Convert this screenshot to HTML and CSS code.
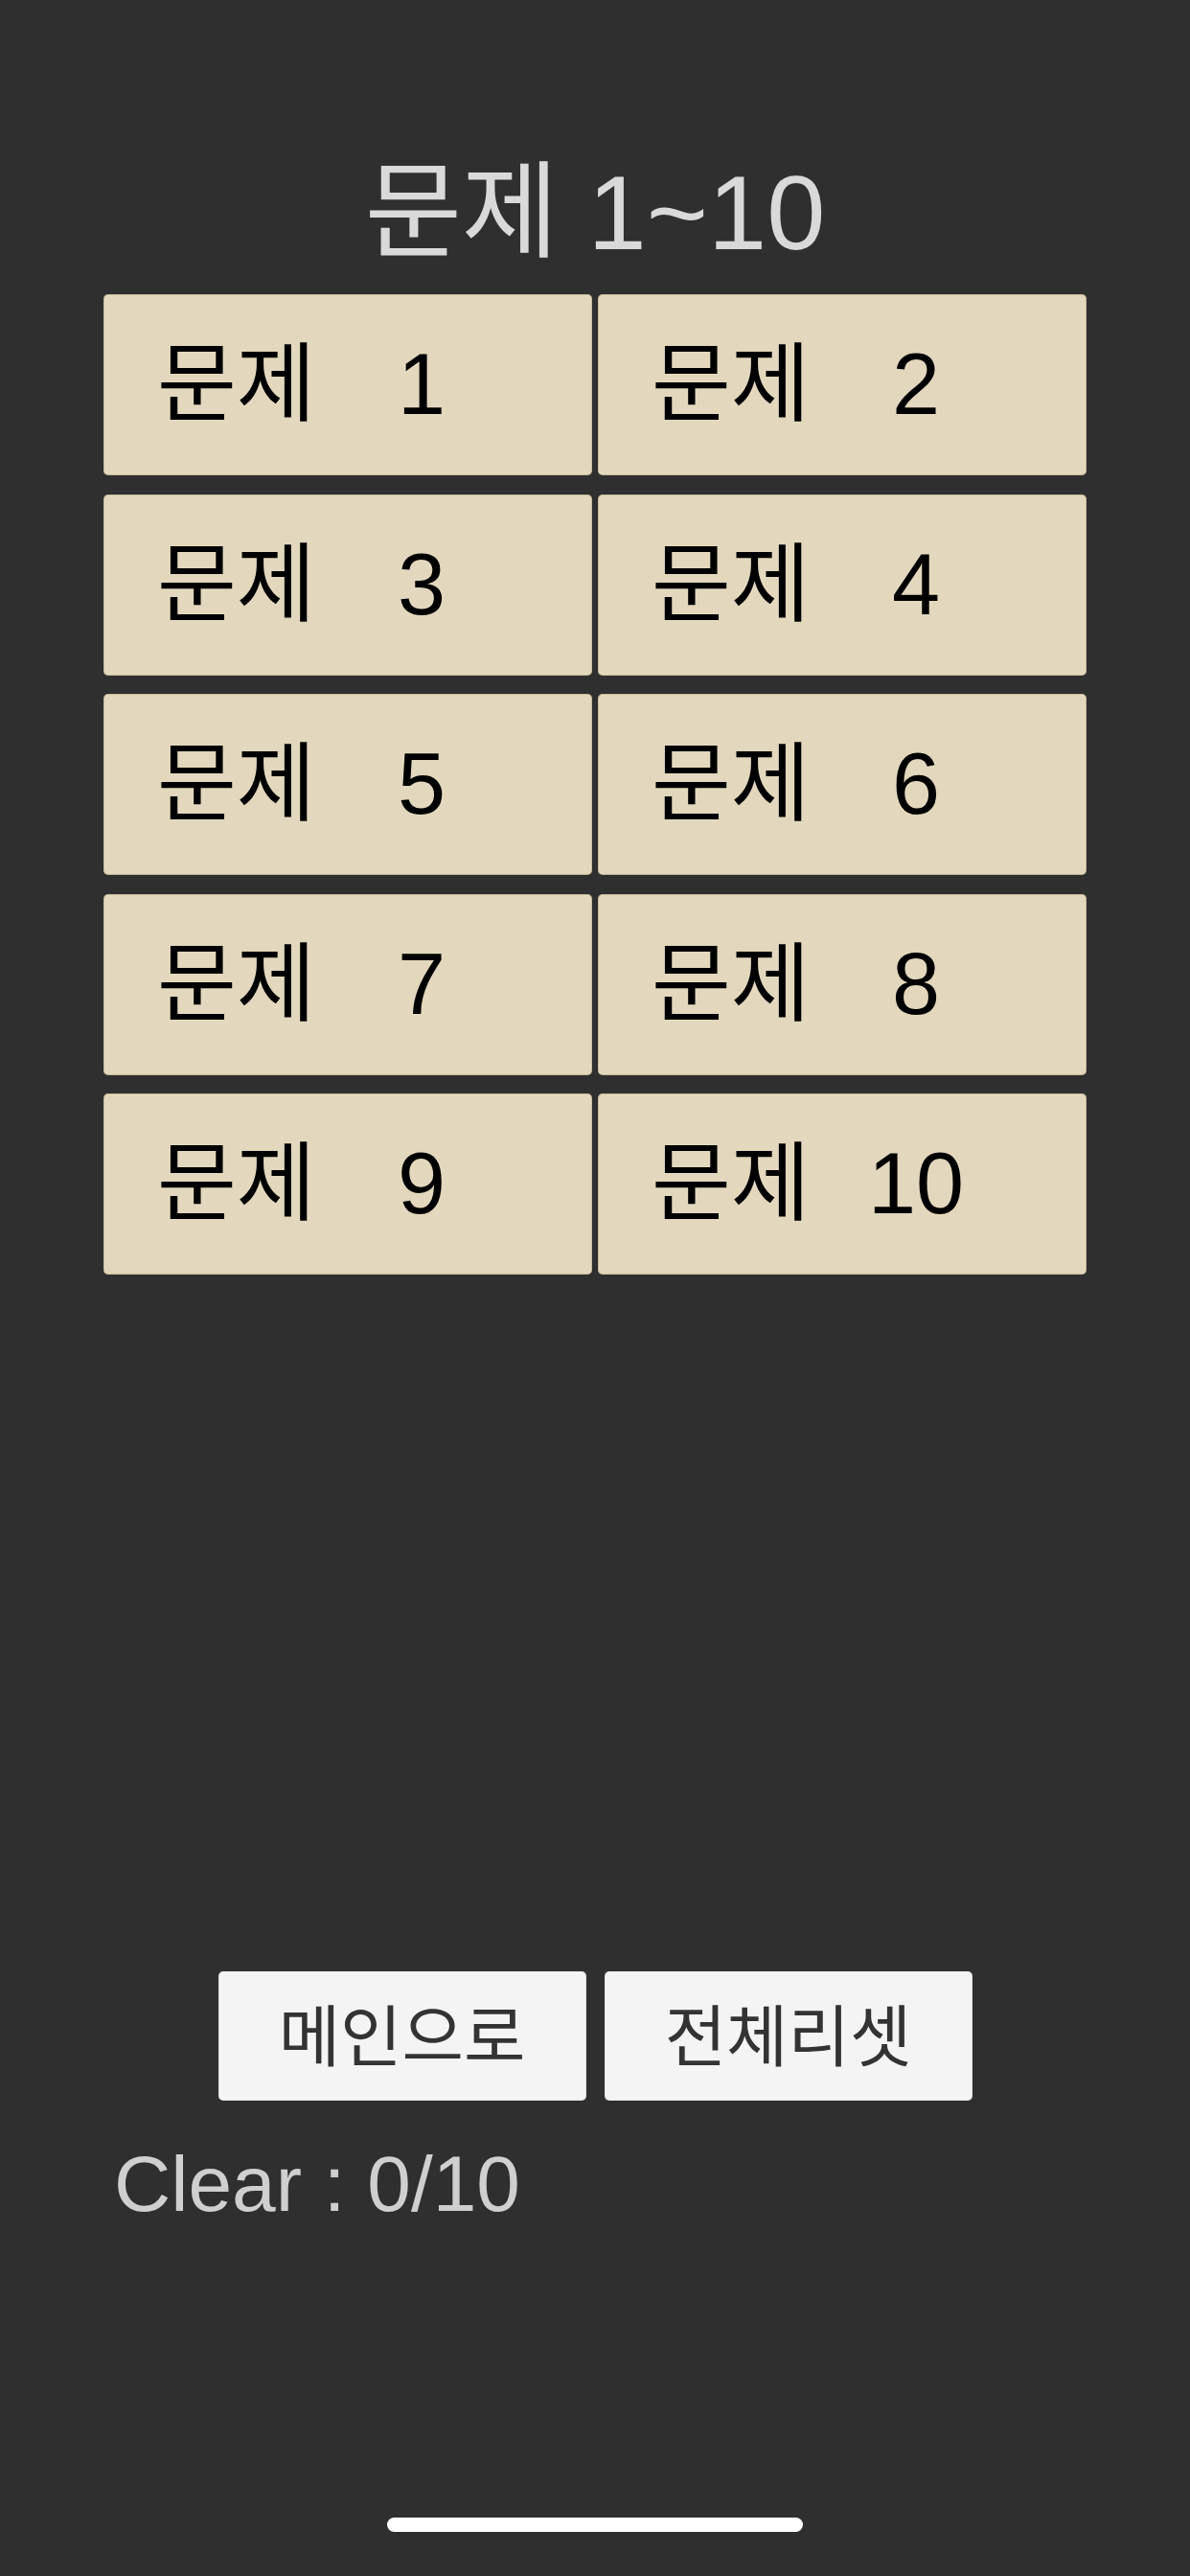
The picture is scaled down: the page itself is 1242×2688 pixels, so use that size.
FILE: index.html
```html
<!DOCTYPE html>
<html lang="ko">
<head>
<meta charset="utf-8">
<title>문제 1~10</title>
<link rel="stylesheet" href="styles.css">
</head>
<body>
<div class="screen">
  <h1 class="title">문제 1~10</h1>
  <div class="grid">
    <button class="q"><span class="q-label">문제</span><span class="q-num">1</span></button>
    <button class="q"><span class="q-label">문제</span><span class="q-num">2</span></button>
    <button class="q"><span class="q-label">문제</span><span class="q-num">3</span></button>
    <button class="q"><span class="q-label">문제</span><span class="q-num">4</span></button>
    <button class="q"><span class="q-label">문제</span><span class="q-num">5</span></button>
    <button class="q"><span class="q-label">문제</span><span class="q-num">6</span></button>
    <button class="q"><span class="q-label">문제</span><span class="q-num">7</span></button>
    <button class="q"><span class="q-label">문제</span><span class="q-num">8</span></button>
    <button class="q"><span class="q-label">문제</span><span class="q-num">9</span></button>
    <button class="q"><span class="q-label">문제</span><span class="q-num">10</span></button>
  </div>
  <div class="footer">
    <div class="actions">
      <button class="act">메인으로</button>
      <button class="act">전체리셋</button>
    </div>
    <div class="clear">Clear : 0/10</div>
    <div class="home-bar"></div>
  </div>
</div>
</body>
</html>
```
FILE: styles.css
```css
html, body {
  margin: 0;
  padding: 0;
  background: #2f2f2f;
}

body {
  font-family: "Liberation Sans", "Noto Sans CJK KR", sans-serif;
}

.screen {
  height: 2688px;
  display: flex;
  flex-direction: column;
  box-sizing: border-box;
}

.title {
  margin: 156px 0 0;
  font-size: 110px;
  line-height: 132px;
  font-weight: normal;
  text-align: center;
  color: #d9d9d9;
}

.grid {
  margin: 19px auto 0;
  width: 1026px;
  display: grid;
  grid-template-columns: 1fr 1fr;
  grid-auto-rows: 189px;
  column-gap: 6px;
  row-gap: 19.5px;
}

.q {
  display: grid;
  grid-template-columns: 236px 192px;
  align-items: center;
  padding: 0;
  margin: 0;
  border: none;
  border-radius: 5px;
  background: #e3d8bd;
  box-shadow: inset 0 0 0 1px rgba(150, 130, 90, 0.35);
  font-family: "Liberation Sans", "Noto Sans CJK KR", sans-serif;
  font-size: 90px;
  line-height: 189px;
  color: #000;
  text-align: left;
}

.q-label {
  padding-left: 56px;
  white-space: nowrap;
}

.q-num {
  text-align: center;
}

.footer {
  margin-top: auto;
  display: flex;
  flex-direction: column;
}

.actions {
  display: flex;
  justify-content: center;
  gap: 19px;
}

.act {
  width: 384px;
  height: 135px;
  margin: 0;
  padding: 0 0 8px;
  border: none;
  border-radius: 5px;
  background: #f4f4f4;
  box-shadow: inset 0 0 0 1px rgba(0, 0, 0, 0.08);
  font-family: "Noto Sans CJK KR", sans-serif;
  font-size: 70px;
  line-height: 127px;
  color: #333;
}

.clear {
  margin-top: 37px;
  padding-left: 119px;
  font-size: 82px;
  line-height: 100px;
  color: #cfcfcf;
}

.home-bar {
  align-self: center;
  width: 434px;
  height: 15px;
  margin: 298px 0 46px;
  border-radius: 8px;
  background: #ffffff;
}
```
